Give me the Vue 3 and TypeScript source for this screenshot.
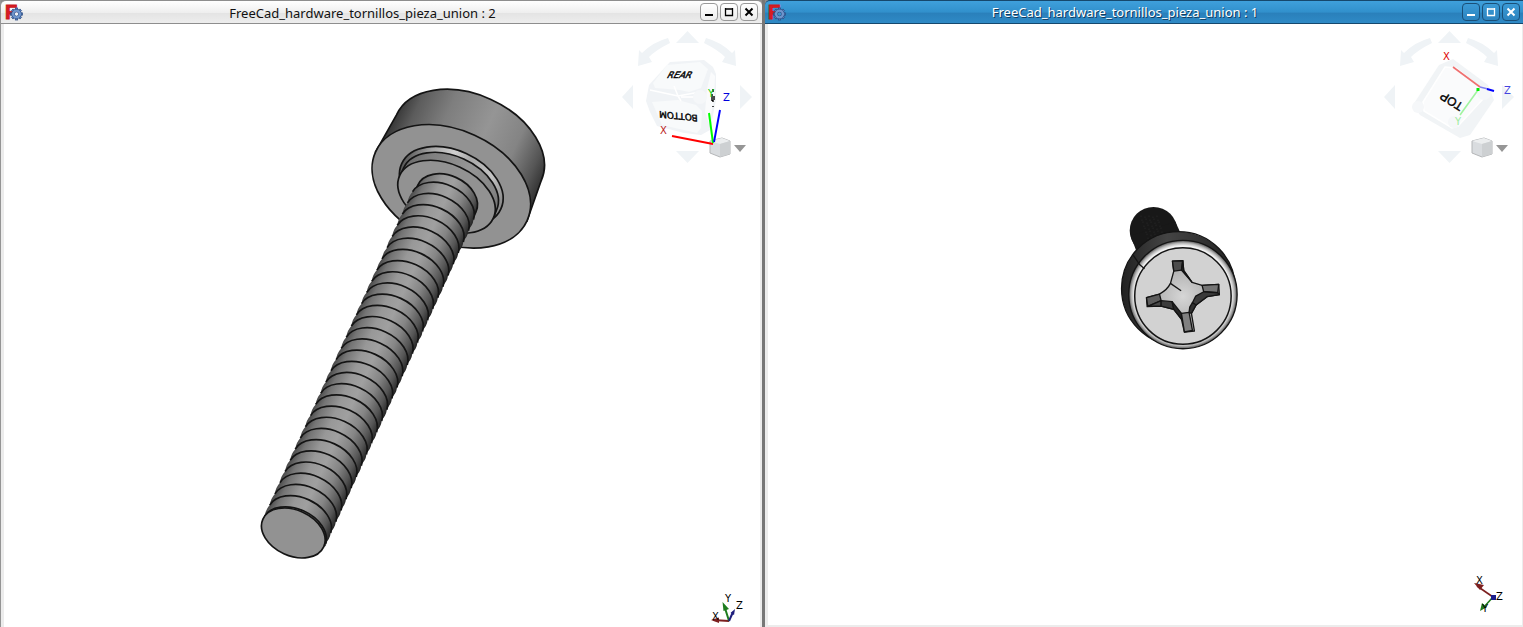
<script setup lang="ts">
interface View {
  id: number
  active: boolean
}

const documentName = 'FreeCad_hardware_tornillos_pieza_union'
const views: View[] = [
  { id: 2, active: false },
  { id: 1, active: true },
]

// Thread turns along the screw axis, in the screw's own rotated frame.
const pitch = 12.3
const lastEdge = 381
const turns: number[] = Array.from({ length: 30 }, (_, i) => Math.round((21 + i * pitch) * 10) / 10)

function turnPath(y: number): string {
  const n = Math.min(y + pitch, lastEdge)
  return `M-33 ${y} A33.6 22.8 0 0 1 34 ${y} Q36 ${(y + n) / 2} 33 ${n} L-33 ${n} Q-35 ${(y + n) / 2} -33 ${y} Z`
}

function turnEdge(y: number): string {
  return `M-33 ${y} A33.6 22.8 0 0 1 34 ${y}`
}

const gearTeeth: number[] = [0, 45, 90, 135, 180, 225, 270, 315]

const specks: { x: number; y: number }[] = Array.from({ length: 40 }, (_, i) => ({
  x: 1141 + (i % 5) * 4 + Math.floor(i / 5),
  y: 216 + Math.floor(i / 5) * 3 + (i % 2),
}))
</script>

<template>
  <main class="workspace">
    <section
      v-for="view in views"
      :key="view.id"
      class="window"
      :class="view.active ? 'window-active' : 'window-idle'"
      :aria-label="`${documentName} : ${view.id}`"
    >
      <header class="titlebar">
        <svg class="logo" viewBox="0 0 20 20" aria-hidden="true">
          <text class="logo-letter" x="0" y="17">F</text>
          <g transform="translate(11.5 12)">
            <rect
              v-for="angle in gearTeeth"
              :key="angle"
              x="-1.2"
              y="-6"
              width="2.4"
              height="4"
              fill="#5f86c2"
              stroke="#27477f"
              stroke-width="0.7"
              :transform="`rotate(${angle})`"
            />
            <circle r="3.4" fill="none" stroke="#27477f" stroke-width="3.4" />
            <circle r="3.4" fill="none" stroke="#6f95cc" stroke-width="2.4" />
            <circle r="1.7" :fill="view.active ? '#3d93cc' : '#eef1f5'" />
          </g>
        </svg>
        <h1 class="title">{{ documentName }} : {{ view.id }}</h1>
        <div class="controls">
          <button type="button" class="control" aria-label="Minimize">
            <svg viewBox="0 0 10 10" aria-hidden="true"><path d="M1 8h8" /></svg>
          </button>
          <button type="button" class="control" aria-label="Maximize">
            <svg viewBox="0 0 10 10" aria-hidden="true"><path d="M1.5 1v7.500h7V1M1 2h8" stroke-width="1.3" /></svg>
          </button>
          <button type="button" class="control" aria-label="Close">
            <svg viewBox="0 0 10 10" aria-hidden="true"><path d="M1.5 1.5l7 7M8.5 1.5l-7 7" /></svg>
          </button>
        </div>
      </header>

      <div class="canvas">
        <svg v-if="view.id === 2" class="model" viewBox="4 24 756 603" role="img" aria-label="Screw seen from the thread end">
          <defs>
            <linearGradient id="headSide" gradientUnits="userSpaceOnUse" x1="-84" y1="0" x2="84" y2="0">
              <stop offset="0" stop-color="#303030" />
              <stop offset="0.12" stop-color="#5c5c5c" />
              <stop offset="0.3" stop-color="#7e7e7e" />
              <stop offset="0.55" stop-color="#959595" />
              <stop offset="0.75" stop-color="#848484" />
              <stop offset="0.9" stop-color="#555" />
              <stop offset="1" stop-color="#2c2c2c" />
            </linearGradient>
            <linearGradient id="recess" gradientUnits="userSpaceOnUse" x1="-55" y1="0" x2="55" y2="0">
              <stop offset="0" stop-color="#555" />
              <stop offset="0.2" stop-color="#a6a6a6" />
              <stop offset="0.4" stop-color="#d0d0d0" />
              <stop offset="0.55" stop-color="#a8a8a8" />
              <stop offset="0.8" stop-color="#c4c4c4" />
              <stop offset="1" stop-color="#858585" />
            </linearGradient>
            <linearGradient id="thread" gradientUnits="userSpaceOnUse" x1="-34" y1="0" x2="35" y2="0">
              <stop offset="0" stop-color="#484848" />
              <stop offset="0.12" stop-color="#747474" />
              <stop offset="0.32" stop-color="#989898" />
              <stop offset="0.5" stop-color="#a0a0a0" />
              <stop offset="0.7" stop-color="#858585" />
              <stop offset="0.88" stop-color="#555" />
              <stop offset="1" stop-color="#242424" />
            </linearGradient>
          </defs>
          <g transform="translate(451.3 186.3) rotate(24.5)" stroke="#141414" stroke-width="1.7">
            <path d="M-83.2 0L-79.5 -42A79.5 53.5 0 0 1 79.5 -42L83.2 0Z" fill="url(#headSide)" />
            <ellipse rx="83.2" ry="56.200" fill="#929292" />
            <ellipse rx="54.5" ry="36" fill="url(#recess)" />
            <path d="M-51 11.5L-51 3A51 33 0 0 1 51 3L51.5 11.5Z" fill="url(#headSide)" />
            <ellipse cy="11.5" rx="51.4" ry="32.5" fill="#929292" />
            <path d="M-31 27V13A32 23 0 0 1 33 13V27Z" fill="url(#thread)" />
            <path v-for="y in turns" :key="`fill-${y}`" :d="turnPath(y)" fill="url(#thread)" stroke="none" />
            <path v-for="y in turns" :key="`edge-${y}`" :d="turnEdge(y)" fill="none" />
            <ellipse cy="381" rx="33.4" ry="22.8" fill="#929292" />
          </g>
        </svg>

        <svg v-else class="model" viewBox="768 24 755 602" role="img" aria-label="Screw seen from the head">
          <defs>
            <radialGradient id="rim" cx="0.5" cy="0.5" r="0.5">
              <stop offset="0.9" stop-color="#f2f2f2" />
              <stop offset="0.95" stop-color="#b4b4b4" />
              <stop offset="1" stop-color="#4e4e4e" />
            </radialGradient>
            <radialGradient id="socket" cx="0.5" cy="0.5" r="0.5">
              <stop offset="0" stop-color="#d6d6d6" />
              <stop offset="1" stop-color="#a6a6a6" />
            </radialGradient>
            <linearGradient id="backHead" x1="0" y1="0" x2="1" y2="0">
              <stop offset="0" stop-color="#222" />
              <stop offset="0.4" stop-color="#444" />
              <stop offset="1" stop-color="#222" />
            </linearGradient>
          </defs>
          <circle cx="1154" cy="231" r="23.800" fill="#181818" />
          <path d="M1131 236L1137 252L1184 240L1176 222Z" fill="#181818" />
          <rect v-for="(speck, i) in specks" :key="i" :x="speck.x" :y="speck.y" width="1" height="1" fill="#2c2c2c" />
          <circle cx="1179" cy="289" r="57" fill="url(#backHead)" stroke="#141414" stroke-width="1.3" />
          <circle cx="1183.500" cy="295" r="54.300" fill="url(#rim)" stroke="#141414" stroke-width="1.3" />
          <circle cx="1183.500" cy="296.500" r="48.300" fill="#d2d2d2" stroke="#141414" stroke-width="1.5" />
          <g transform="translate(1111 195.5) scale(0.33333)" stroke="#141414" stroke-width="4" stroke-linejoin="round">
            <path d="M68 180L88 209L102 221" fill="none" />
            <path
              d="M186 198L217 197L220 227Q232 244 245 262L275 271L325 268L327 299L290 305L257 330L243 355L252 408L222 411L213 372L190 343L152 333L110 335L108 308L147 297Q170 285 180 265L190 228Z"
              fill="url(#socket)"
            />
            <path d="M186 198L217 197L213 225L190 228Z" fill="#4c4c4c" />
            <path d="M217 197L220 227L245 262L213 225Z" fill="#222" />
            <path d="M275 271L325 268L322 293L280 290Z" fill="#747474" />
            <path d="M280 290L322 293L327 299L290 305L257 330L246 323L256 303Z" fill="#3a3a3a" />
            <path d="M246 323L257 330L243 355L236 352L238 336Z" fill="#303030" />
            <path d="M108 308L147 297L152 317L112 334Z" fill="#5c5c5c" />
            <path d="M112 334L152 317L152 333Z" fill="#484848" />
            <path d="M152 317L185 320L190 343L152 333Z" fill="#3c3c3c" />
            <path d="M185 320L213 355L213 372L190 343Z" fill="#262626" />
            <path d="M213 355L236 352L246 406L222 411Z" fill="#808080" />
            <path d="M180 265L212 287" fill="none" />
          </g>
        </svg>

        <svg class="navcube" viewBox="0 0 130 134" role="img" aria-label="Navigation cube">
          <g fill="#eff3f6">
            <path d="M65.500 -1L77 11H54Z" />
            <path d="M65.500 131L54 119H77Z" />
            <path d="M0 65L11 53V77Z" />
            <path d="M130 65L118 53V77Z" />
            <path d="M46 6L48 11Q34 18 27 25L30 30L16 34L17 18L20 21Q31 10 46 6Z" />
            <path d="M84 6L82 11Q96 18 103 25L100 30L114 34L113 18L110 21Q99 10 84 6Z" />
          </g>

          <g v-if="view.id === 2">
            <path d="M48 30L82 28L91 35L94 42V68L88 98L79 103L62 101L35 94L28 80L24 69L27 53Z" fill="#f0f3f6" />
            <path d="M45 33L78 30L86 37L79 56L67 60L58 58L33 56L31 51Z" fill="#f8fafb" />
            <path d="M30 70L56 68L74 73L80 79L79 96L75 101L40 93Z" fill="#f8fafb" />
            <path d="M89 40L93 44L92 67L87 92L83 80L85 57Z" fill="#fafbfc" />
            <path d="M28 58L56 64L78 60M56 64L52 54M56 64L59 69M59 65L76 65" fill="none" stroke="#fff" stroke-width="1.5" />
            <circle cx="78" cy="65" r="7" fill="#f5f7f9" />
            <text class="face-label face-label-rear" transform="translate(58.500 42) skewX(-28)" text-anchor="middle" x="0" y="4">REAR</text>
            <text class="face-label face-label-bottom" transform="translate(56.500 85) rotate(186) skewX(8)" text-anchor="middle" x="0" y="4">BOTTOM</text>
            <path d="M91 57V60M90 62V69M92 64V68M91 68V70M91 74V75" fill="none" stroke="#000" stroke-width="1.4" />
          </g>
          <g v-else>
            <path d="M55 33L69 27L104 53L110 68L86 103L76 106L36 83L29 73Z" fill="#f1f4f6" />
            <path d="M61 35L72 36L98 57L99 67L74 94L68 96L40 79L39 70Z" fill="#fafbfc" stroke="#fff" stroke-width="1.5" />
            <circle cx="34" cy="75" r="6" fill="#f5f7f9" />
            <circle cx="100" cy="61" r="7" fill="#f5f7f9" />
            <circle cx="70" cy="90" r="6" fill="#f5f7f9" />
            <text class="face-label face-label-top" transform="translate(67 70) rotate(212)" text-anchor="middle" x="0" y="5">TOP</text>
          </g>

          <g>
            <path d="M88 109L100 106L108 109V122L98 125L88 121Z" fill="#d9dcdf" stroke="#b4b6b8" />
            <path d="M88 109L98 112L108 109L100 106Z" fill="#eceeef" />
            <path d="M98 112L108 109V122L98 125Z" fill="#cdd0d2" />
            <path d="M112 113H124L118 120Z" fill="#969696" />
          </g>

          <g v-if="view.id === 2" fill="none" stroke-width="2">
            <path d="M50 104L91 112" stroke="#f00" />
            <path d="M87 81L91 111" stroke="#0f0" />
            <path d="M98 78L92 110" stroke="#00f" />
            <text class="axis-label" x="38" y="102" fill="#b22" stroke="none">X</text>
            <text class="axis-label" x="86" y="65" fill="#1c1" stroke="none">Y</text>
            <text class="axis-label" x="101" y="69" fill="#00d" stroke="none">Z</text>
          </g>
          <g v-else fill="none" stroke-width="1.6">
            <path d="M69 35L96 55" stroke="#ef7070" />
            <path d="M94 58L76 83" stroke="#a0f4a0" />
            <path d="M96 55L104 57" stroke="#8080ef" />
            <path d="M103 57L110 59" stroke="#00f" stroke-width="2" />
            <path d="M94 56V59" stroke="#0e0" stroke-width="3" />
            <text class="axis-label" x="59" y="28" fill="#d00" stroke="none">X</text>
            <text class="axis-label" x="71" y="93" fill="#a0eca0" stroke="none">Y</text>
            <text class="axis-label" x="120" y="62" fill="#4444e0" stroke="none">Z</text>
          </g>
        </svg>

        <svg v-if="view.id === 2" class="axes axes-front" viewBox="0 0 40 36" role="img" aria-label="Axis cross">
          <path d="M20 30L4 29" stroke="#7c1f1f" stroke-width="2" />
          <path d="M2 29L10 26.500V32Z" fill="#7c1f1f" />
          <path d="M20 30L16 17" stroke="#1e7c1e" stroke-width="2" />
          <path d="M13.500 11L20 18L14.500 20Z" fill="#1e7c1e" />
          <path d="M20 30L24 21" stroke="#1e1e7c" stroke-width="2" />
          <path d="M26 18L25 24L21.500 22Z" fill="#1e1e7c" />
          <text class="axis-label" x="3" y="29">X</text>
          <text class="axis-label" x="16" y="11">Y</text>
          <text class="axis-label" x="27" y="18">Z</text>
        </svg>
        <svg v-else class="axes axes-top" viewBox="0 0 40 40" role="img" aria-label="Axis cross">
          <path d="M23 24L7 13" stroke="#7c1f1f" stroke-width="1.6" />
          <path d="M4 10L14 12L10 17Z" fill="#7c1f1f" />
          <path d="M23 24L14 34" stroke="#1e7c1e" stroke-width="1.6" />
          <path d="M10 38L12 30L17 34Z" fill="#1e7c1e" />
          <rect x="21" y="22" width="5" height="5" fill="#1e1e8c" />
          <text class="axis-label" x="6" y="11">X</text>
          <text class="axis-label" x="12" y="39">Y</text>
          <text class="axis-label" x="26" y="27">Z</text>
        </svg>
      </div>
    </section>
  </main>
</template>

<style>
body {
  margin: 0;
  background: #fff;
}
</style>

<style scoped>
.workspace {
  display: grid;
  grid-template-columns: 764fr 759fr;
  height: 100vh;
  overflow: hidden;
  background: #8c8c8c;
  font-family: "Noto Sans", "Open Sans", sans-serif;
}

.window {
  display: flex;
  flex-direction: column;
  min-width: 0;
  min-height: 0;
  box-sizing: border-box;
}

.window-idle {
  border-right: 2px solid #777;
  border-left: 1px solid #949494;
}

.window-active {
  border-left: 1px solid #777;
}

.titlebar {
  display: flex;
  align-items: center;
  flex: none;
  height: 24px;
  box-sizing: border-box;
  border-top: 1px solid #8e8e8e;
  border-bottom: 1px solid #8e8e8e;
  border-radius: 5px 5px 0 0;
  padding: 0 4px;
  background: linear-gradient(#fff, #eee 55%, #e4e4e4 56%, #ededed);
  color: #111;
}

.window-active .titlebar {
  padding: 0 3px;
  border-color: #16486d;
  border-radius: 5px 0 0;
  background: linear-gradient(#3fa0dc, #3190cc 50%, #2a80bb 56%, #2f8ac6);
  color: #fff;
}

.logo {
  width: 20px;
  height: 20px;
  overflow: visible;
}

.logo-letter {
  font: bold 20px "Liberation Sans", Arial, sans-serif;
  fill: #dc1c22;
  stroke: #c8181d;
  stroke-width: 1px;
}

.title {
  flex: 1;
  margin: 0;
  font-size: 13px;
  font-weight: 400;
  line-height: 22px;
  text-align: center;
  white-space: nowrap;
}

.window-idle .title {
  padding-top: 1px;
}

.window-active .title {
  text-shadow: 1px 1px 0 #123c5e;
}

.controls {
  display: flex;
  gap: 2px;
}

.control {
  display: grid;
  place-items: center;
  width: 18px;
  height: 18px;
  box-sizing: border-box;
  border: 1px solid #999;
  border-radius: 4px;
  padding: 0;
  background: linear-gradient(#fff, #ececec);
  color: #000;
}

.window-active .control {
  border-color: #1a4f77;
  background: linear-gradient(#3b9ad6, #2c84bf);
  color: #fff;
}

.control svg {
  width: 10px;
  height: 10px;
  fill: none;
  stroke: currentColor;
  stroke-width: 2;
}

.canvas {
  position: relative;
  flex: 1;
  min-height: 0;
  border-right: 2px solid #ececec;
  border-left: 3px solid #ececec;
  background: #fff;
}

.window-active .canvas {
  border-right-width: 1px;
  border-bottom: 2px solid #ececec;
}

.model {
  display: block;
  width: 100%;
  height: 100%;
}

.navcube {
  position: absolute;
  top: 8px;
  right: 8px;
  width: 130px;
  height: 134px;
  overflow: visible;
}

.face-label {
  font: 12px "DejaVu Sans", sans-serif;
  fill: #000;
  stroke: #000;
  stroke-width: 0.4px;
}

.face-label-rear {
  font-size: 9px;
}

.face-label-bottom {
  font-size: 9px;
}

.face-label-top {
  font-family: "Liberation Sans", Arial, sans-serif;
}

.axis-label {
  font: 10px "DejaVu Sans", sans-serif;
}

.axes {
  position: absolute;
  width: 40px;
  overflow: visible;
}

.axes-front {
  right: 11px;
  bottom: 0;
  height: 36px;
}

.axes-top {
  right: 12px;
  bottom: 12px;
  height: 40px;
}
</style>
